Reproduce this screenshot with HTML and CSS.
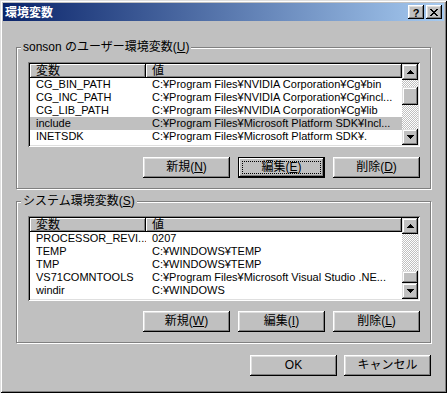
FILE: index.html
```html
<!DOCTYPE html>
<html>
<head>
<meta charset="utf-8">
<link rel="stylesheet" href="styles.css">
</head>
<body>

<div class="window">
  <div class="titlebar">
    <span class="title">環境変数</span>
    <div class="caption-btns">
      <span class="cbtn help">?</span>
      <span class="cbtn">
        <svg width="8" height="7" viewBox="0 0 8 7"><path d="M0 0h2v1H0z M6 0h2v1H6z M1 1h2v1H1z M5 1h2v1H5z M2 2h4v1H2z M3 3h2v1H3z M2 4h4v1H2z M1 5h2v1H1z M5 5h2v1H5z M0 6h2v1H0z M6 6h2v1H6z" fill="#000"/></svg>
      </span>
    </div>
  </div>

  <div class="client">

    <div class="group">
      <div class="group-title">sonson のユーザー環境変数(<u>U</u>)</div>
      <div class="listbox">
        <div class="list-main">
          <div class="list-head"><span class="col-name">変数</span><span class="col-val">値</span></div>
          <div class="row"><span class="col-name">CG_BIN_PATH</span><span class="col-val">C:¥Program Files¥NVIDIA Corporation¥Cg¥bin</span></div>
          <div class="row"><span class="col-name">CG_INC_PATH</span><span class="col-val">C:¥Program Files¥NVIDIA Corporation¥Cg¥incl...</span></div>
          <div class="row"><span class="col-name">CG_LIB_PATH</span><span class="col-val">C:¥Program Files¥NVIDIA Corporation¥Cg¥lib</span></div>
          <div class="row selected"><span class="col-name">include</span><span class="col-val">C:¥Program Files¥Microsoft Platform SDK¥Incl...</span></div>
          <div class="row"><span class="col-name">INETSDK</span><span class="col-val">C:¥Program Files¥Microsoft Platform SDK¥.</span></div>
          <div class="row"><span class="col-name">lib</span><span class="col-val">C:¥Program Files¥Microsoft Platform SDK¥Lib</span></div>
        </div>
        <div class="vscroll">
          <div class="sb-btn"><svg width="7" height="4" viewBox="0 0 7 4"><path d="M3 0h1v1h1v1h1v1h1v1H0V3h1V2h1V1h1z" fill="#000"/></svg></div>
          <div class="sb-track"><div class="sb-thumb thumb-user"></div></div>
          <div class="sb-btn"><svg width="7" height="4" viewBox="0 0 7 4"><path d="M0 0h7v1H6v1H5v1H4v1H3V3H2V2H1V1H0z" fill="#000"/></svg></div>
        </div>
      </div>
      <div class="btn-row">
        <button class="btn">新規(<u>N</u>)</button>
        <button class="btn default">編集(<u>E</u>)</button>
        <button class="btn">削除(<u>D</u>)</button>
      </div>
    </div>

    <div class="group">
      <div class="group-title">システム環境変数(<u>S</u>)</div>
      <div class="listbox">
        <div class="list-main">
          <div class="list-head"><span class="col-name">変数</span><span class="col-val">値</span></div>
          <div class="row"><span class="col-name">PROCESSOR_REVI...</span><span class="col-val">0207</span></div>
          <div class="row"><span class="col-name">TEMP</span><span class="col-val">C:¥WINDOWS¥TEMP</span></div>
          <div class="row"><span class="col-name">TMP</span><span class="col-val">C:¥WINDOWS¥TEMP</span></div>
          <div class="row"><span class="col-name">VS71COMNTOOLS</span><span class="col-val">C:¥Program Files¥Microsoft Visual Studio .NE...</span></div>
          <div class="row"><span class="col-name">windir</span><span class="col-val">C:¥WINDOWS</span></div>
        </div>
        <div class="vscroll">
          <div class="sb-btn"><svg width="7" height="4" viewBox="0 0 7 4"><path d="M3 0h1v1h1v1h1v1h1v1H0V3h1V2h1V1h1z" fill="#000"/></svg></div>
          <div class="sb-track"><div class="sb-thumb thumb-system"></div></div>
          <div class="sb-btn"><svg width="7" height="4" viewBox="0 0 7 4"><path d="M0 0h7v1H6v1H5v1H4v1H3V3H2V2H1V1H0z" fill="#000"/></svg></div>
        </div>
      </div>
      <div class="btn-row">
        <button class="btn">新規(<u>W</u>)</button>
        <button class="btn">編集(<u>I</u>)</button>
        <button class="btn">削除(<u>L</u>)</button>
      </div>
    </div>

    <div class="dlg-btns">
      <button class="btn">OK</button>
      <button class="btn">キャンセル</button>
    </div>

  </div>
</div>

</body>
</html>
```

FILE: styles.css
```css
html, body {
  margin: 0;
}

body {
  font-family: "Liberation Sans", "Noto Sans CJK JP", sans-serif;
  font-size: 12px;
  background: #c0c0c0;
  color: #000;
}

*, *:before, *:after {
  box-sizing: border-box;
}

.window {
  width: 447px;
  height: 393px;
  padding: 3px;
  background: #c0c0c0;
  box-shadow: inset 1px 1px #dfdfdf, inset -1px -1px #000, inset 2px 2px #fff, inset -2px -2px #808080;
}

/* title bar */
.titlebar {
  height: 18px;
  display: flex;
  align-items: center;
  justify-content: space-between;
  padding: 0 2px;
  background: linear-gradient(to right, #0a246a, #a6caf0);
}

.title {
  color: #fff;
  font-family: "Noto Sans CJK JP", sans-serif;
  font-weight: bold;
  font-size: 12px;
  line-height: 18px;
}

.caption-btns {
  display: flex;
  gap: 2px;
}

.cbtn {
  width: 16px;
  height: 14px;
  display: flex;
  align-items: center;
  justify-content: center;
  background: #c0c0c0;
  box-shadow: inset -1px -1px #000, inset 1px 1px #fff, inset -2px -2px #808080, inset 2px 2px #dfdfdf;
}

.cbtn.help {
  font-family: "Liberation Sans", sans-serif;
  font-weight: bold;
  font-size: 11px;
  line-height: 14px;
  padding-top: 1px;
}

/* dialog body */
.client {
  padding: 26px 13px 0;
}

.group {
  border: 1px solid #808080;
  box-shadow: 1px 1px 0 #fff, inset 1px 1px 0 #fff;
  padding: 0 10px 10px 11px;
  margin-bottom: 12px;
}

.group-title {
  width: fit-content;
  margin: -8px 0 0 -7px;
  padding: 0 2px;
  line-height: 15px;
  background: #c0c0c0;
}

.listbox {
  display: flex;
  height: 85px;
  margin-top: 7px;
  padding: 2px;
  background: #fff;
  box-shadow: inset 1px 1px #808080, inset -1px -1px #fff, inset 2px 2px #000, inset -2px -2px #dfdfdf;
}

.list-main {
  flex: 1;
  overflow: hidden;
  font-size: 11px;
}

.list-head, .row {
  display: flex;
  white-space: nowrap;
}

.list-head {
  height: 14px;
  line-height: 14px;
  font-size: 12px;
  background: #c0c0c0;
}

.list-head span {
  box-shadow: inset -1px -1px #000, inset 1px 1px #fff, inset -2px -2px #808080;
}

.col-name {
  width: 116px;
  flex-shrink: 0;
  padding-left: 6px;
  overflow: hidden;
}

.col-val {
  flex: 1;
  padding-left: 6px;
  overflow: hidden;
}

.row {
  height: 13px;
  line-height: 13px;
}

.row.selected {
  background: #c0c0c0;
}

/* scroll bar */
.vscroll {
  width: 16px;
  display: flex;
  flex-direction: column;
}

.sb-btn {
  height: 16px;
  display: flex;
  align-items: center;
  justify-content: center;
  background: #c0c0c0;
  box-shadow: inset -1px -1px #000, inset 1px 1px #dfdfdf, inset -2px -2px #808080, inset 2px 2px #fff;
}

.sb-track {
  flex: 1;
  display: flex;
  flex-direction: column;
  background: repeating-conic-gradient(#c0c0c0 0 25%, #fff 0 50%) 0 0 / 2px 2px;
}

.sb-thumb {
  background: #c0c0c0;
  box-shadow: inset -1px -1px #000, inset 1px 1px #dfdfdf, inset -2px -2px #808080, inset 2px 2px #fff;
}

.thumb-user {
  height: 18px;
  margin-top: 7px;
}

.thumb-system {
  height: 12px;
  margin-top: auto;
}

/* push buttons */
.btn-row, .dlg-btns {
  display: flex;
  justify-content: flex-end;
}

.btn-row {
  gap: 8px;
  margin-top: 10px;
}

.dlg-btns {
  gap: 7px;
}

.btn {
  width: 87px;
  height: 21px;
  padding: 0;
  border: none;
  font-family: "Liberation Sans", "Noto Sans CJK JP", sans-serif;
  font-size: 12px;
  line-height: 21px;
  color: #000;
  background: #c0c0c0;
  box-shadow: inset -1px -1px #000, inset 1px 1px #fff, inset -2px -2px #808080, inset 2px 2px #dfdfdf;
}

.btn.default {
  box-shadow: inset 0 0 0 1px #000, inset -2px -2px #000, inset 2px 2px #fff, inset -3px -3px #808080;
  outline: 1px dotted #000;
  outline-offset: -5px;
}
```
